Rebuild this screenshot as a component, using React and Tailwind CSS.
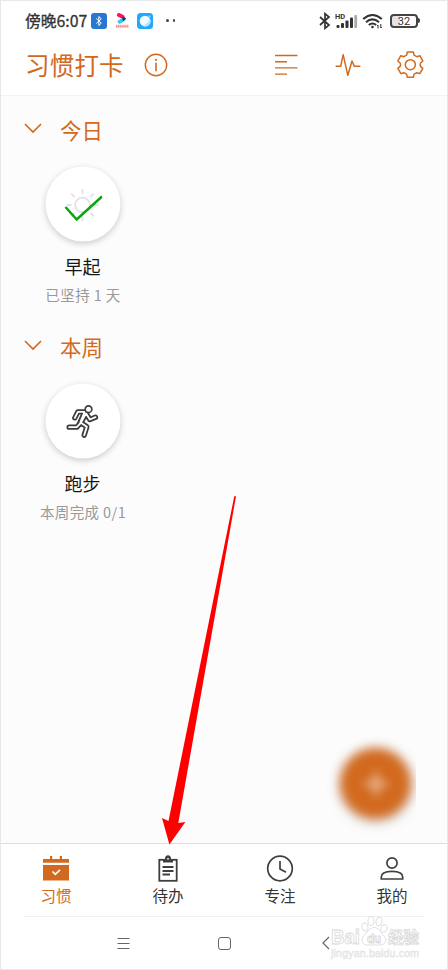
const ORANGE = "#d2691e";

function StatusBar() {
  return (
    <div className="h-[40px] pl-[25px] pr-[28px] pt-[1px] flex items-center justify-between text-[#333]">
      <div className="flex items-center">
        <span className="w-[63px] text-[15.8px] leading-5 font-normal [-webkit-text-stroke:0.3px_#333] whitespace-nowrap">傍晚6:07</span>
        {/* bluetooth */}
        <svg className="ml-[3px]" width="16" height="16" viewBox="0 0 16 16">
          <rect width="16" height="16" rx="3" fill="#2878cf" />
          <path d="M5.3 5.5 10.3 10.2 7.8 12.5V3.5l2.5 2.3-5 4.7" fill="none" stroke="#fff" strokeWidth="1" />
        </svg>
        {/* video app */}
        <svg className="ml-[7px]" width="16" height="16" viewBox="0 0 16 16">
          <path d="M5 2 8.500 3.800" stroke="#f5146c" strokeWidth="4" strokeLinecap="round" />
          <path d="M5.500 8.800 10 6.200" stroke="#33c9ef" strokeWidth="3.800" strokeLinecap="round" />
          <path d="M9 4 11.500 5.600 9 7.600Z" fill="#26305b" stroke="#26305b" strokeLinejoin="round" />
          <path d="M2 13.200h13" stroke="#f58a8e" strokeWidth="3" strokeDasharray="1.3 .8" />
          <path d="M3 13.500h11" stroke="#f8a0a0" strokeWidth="1" />
        </svg>
        <svg className="ml-[7px]" width="16" height="16" viewBox="0 0 16 16">
          <rect width="16" height="16" rx="3.5" fill="#20a9fa" />
          <circle cx="8" cy="8" r="5.3" fill="#f2fbff" />
          <path d="M12.8 5.5A5.3 5.3 0 0 1 5.5 12.8Q11 11 12.8 5.5Z" fill="#b9e5ff" />
          <circle cx="12.5" cy="3.6" r="1" fill="#9ee0ff" />
        </svg>
        <span className="ml-[13px] size-[2.5px] rounded-full bg-[#444]" />
        <span className="ml-[4px] size-[2.5px] rounded-full bg-[#444]" />
      </div>
      <div className="flex items-center">
        <svg width="12" height="18" viewBox="0 0 12 18" fill="none" stroke="#333" strokeWidth="1.7">
          <path d="M1 5 10 13 6 16.3V1.7L10 5 1 13" />
        </svg>
        <svg className="ml-[4px]" width="24" height="18" viewBox="0 0 24 18">
          <text x="0" y="6.500" fontSize="7.500" fontWeight="700" fontFamily="Roboto" fill="#333">HD</text>
          <g fill="#333">
            <rect x="1.500" y="13" width="3" height="3" rx="1" />
            <rect x="6" y="11" width="3" height="5" rx="1" />
            <rect x="10.500" y="8.500" width="3" height="7.500" rx="1" />
            <rect x="15" y="5.500" width="3" height="10.500" rx="1" />
            <rect x="19.300" y="3" width="2.800" height="13" rx="1" fill="#aaa" />
          </g>
        </svg>
        <svg className="ml-[3px]" width="22" height="18" viewBox="0 0 22 18" fill="none" stroke="#333" strokeWidth="2.1">
          <path d="M1.2 7Q10.5-1 19.8 7" />
          <path d="M4 10.2Q10.5 4.7 17 10.2" />
          <path d="M6.8 13Q10.5 10 14.2 13" />
          <circle cx="10.5" cy="15" r="1.3" fill="#333" stroke="none" />
          <path d="M16 16.5V13l-1 1M18.8 12v4l1-1" strokeWidth="1" />
        </svg>
        <div className="ml-[6px] w-[28px] h-[14px] rounded-[4px] border-2 border-[#444] bg-[linear-gradient(90deg,#e4e4e4_32%,#fff_32%)] flex items-center justify-center pt-[1px] text-[11px] leading-none font-[Roboto]">32</div>
        <span className="w-[2px] h-[5px] rounded-r bg-[#444]" />
      </div>
    </div>
  );
}

function Header() {
  return (
    <div className="bg-white h-[96px] border-b border-[#f3f3f3]">
      <StatusBar />
      <div className="h-[50px] pl-[25px] pr-[24px] flex items-center text-[#d2691e]">
        <h1 className="text-[24.5px] leading-[50px] tracking-[0.2px]">习惯打卡</h1>
        <svg className="ml-[20px]" width="24" height="24" viewBox="0 0 24 24" fill="none" stroke={ORANGE} strokeWidth="1.4">
          <circle cx="12" cy="12" r="10.7" />
          <path d="M12 9.7v8.5" strokeWidth="1.6" />
          <circle cx="12" cy="6.8" r="1.1" fill={ORANGE} stroke="none" />
        </svg>
        <div className="ml-auto flex items-center">
          <svg width="24" height="24" viewBox="0 0 24 24" stroke={ORANGE} strokeWidth="1.4">
            <path d="M1 2.5h22.5M1 8.7h12M1 14.9h22.5M1 21.1h12" />
          </svg>
          <svg className="ml-[37px]" width="26" height="26" viewBox="335 155 78 78" fill="none" stroke={ORANGE} strokeWidth="4.5" strokeLinejoin="round">
            <path d="M337 198H352L359.500 163 373.500 225 386 182 393 198H411" />
          </svg>
          <svg className="ml-[35px]" width="28" height="28" viewBox="-43 -41 84 84" fill="none" stroke={ORANGE} strokeWidth="4.500" strokeLinejoin="round">
            <path d="M-9-38H9L11-29Q15-26 19.600-24L28.400-26.800 37.400-11.200 30.600-5Q28 0 30.600 5L37.400 11.200 28.400 26.800 19.600 24Q15 26 11 29L9 38H-9L-11 29Q-15 26-19.600 24L-28.400 26.800-37.400 11.200-30.600 5Q-28 0-30.600-5L-37.400-11.200-28.400-26.800-19.600-24Q-15-26-11-29Z" />
            <circle r="15" />
          </svg>
        </div>
      </div>
    </div>
  );
}

function SunIcon() {
  return (
    <svg width="40" height="34" viewBox="63 187 40 34" fill="none">
      <g stroke="#e2e2e2" strokeWidth="1.8">
        <circle cx="83" cy="204.500" r="7.300" />
        <path d="M83 188.500v5M83 215.500v5M67 204.500h5M94 204.500h5M71.700 193.200l3.400 3.400M94.300 193.200l-3.400 3.400M71.700 215.800l3.400-3.400M94.300 215.800l-3.400-3.400" />
      </g>
      <path d="M66 206.500 77.200 219 102.500 196" stroke="#08a80c" strokeWidth="2.5" />
    </svg>
  );
}

// limbs are stroked twice, the thin white pass hollows them out
const RUNNER = "M226 293 235 275 254 275M259 281 244 308 262 320 254 345M243 309 232 321H209M260 280 271 298 288 291";

function RunIcon() {
  return (
    <svg width="34" height="36" viewBox="198 250 102 108" fill="none" strokeLinecap="round" strokeLinejoin="round">
      <path d={RUNNER} stroke="#3c3c3c" strokeWidth="16" />
      <path d="M254 277 240 308" stroke="#3c3c3c" strokeWidth="14" />
      <path d={RUNNER} stroke="#fff" strokeWidth="5.500" />
      <path d="M255 277 243 306" stroke="#fff" strokeWidth="6" />
      <circle cx="267" cy="267" r="10" fill="#fff" stroke="#3c3c3c" strokeWidth="5" />
    </svg>
  );
}

function Section({ title, name, note, icon }) {
  return (
    <section className="h-[217px]">
      <div className="h-[34px] pl-[24px] flex items-center">
        <svg className="-mt-1" width="18" height="11" viewBox="0 0 18 11" fill="none" stroke={ORANGE} strokeWidth="1.6">
          <path d="M1 1 9 9 17 1" />
        </svg>
        <h2 className="-mt-[1px] ml-[18px] text-[21.5px] leading-[34px] text-[#d2691e]">{title}</h2>
      </div>
      <div className="ml-[28px] mt-[20px] w-[110px] flex flex-col items-center">
        <div className="size-[75px] -translate-x-[0.5px] -translate-y-[0.5px] rounded-full bg-white shadow-[0_2px_6px_rgba(0,0,0,0.2)] flex items-center justify-center">
          {icon}
        </div>
        <div className="-ml-px mt-[12px] text-[18px] leading-6 text-[#171717]">{name}</div>
        <div className="mt-[7px] text-[14.5px] leading-5 text-[#999] tracking-[0.4px] whitespace-nowrap">{note}</div>
      </div>
    </section>
  );
}

function CalendarIcon() {
  return (
    <svg width="28" height="28" viewBox="0 0 28 28">
      <path d="M1 4H8V1H10.200V4H17.800V1H20V4H27V7.800H1ZM1 10H27V25.500H1Z" fill={ORANGE} />
      <path d="M10.500 16.500 13.300 19.300 18 14.800" fill="none" stroke="#fff" strokeWidth="1.7" />
    </svg>
  );
}

function ClipboardIcon() {
  return (
    <svg width="28" height="28" viewBox="0 0 28 28" fill="none" stroke="#3f3f3f" strokeWidth="1.8">
      <rect x="5.300" y="4.800" width="17.400" height="21" />
      <path d="M9 7.500V4H11Q11 .3 14 .3T17 4H19V7.500Z" fill="#3f3f3f" stroke="none" />
      <circle cx="14" cy="3.800" r="0.900" fill="#fff" stroke="none" />
      <path d="M8.500 12h11M8.500 16h11M8.500 19.500h7.500" />
    </svg>
  );
}

function ClockIcon() {
  return (
    <svg width="28" height="28" viewBox="0 0 28 28" fill="none" stroke="#3f3f3f" strokeWidth="1.700">
      <circle cx="14" cy="13.500" r="12.300" />
      <path d="M14 6V14L20 17.300" />
    </svg>
  );
}

function UserIcon() {
  return (
    <svg width="28" height="28" viewBox="0 0 28 28" fill="none" stroke="#3f3f3f" strokeWidth="1.700">
      <circle cx="14" cy="8" r="5.100" />
      <path d="M3.300 24V22C3.300 18 8 16.300 14 16.300S24.700 18 24.700 22V24Z" />
    </svg>
  );
}

const tabs = [
  { label: "习惯", icon: <CalendarIcon />, active: true },
  { label: "待办", icon: <ClipboardIcon /> },
  { label: "专注", icon: <ClockIcon /> },
  { label: "我的", icon: <UserIcon /> },
];

function Watermark() {
  return (
    <svg className="absolute right-[27px] top-[-2px]" width="96" height="46" viewBox="325 915 96 46" stroke="#d8d8d8" strokeWidth="0.8" fill="#fff" fontFamily="'Liberation Sans','Noto Sans CJK SC',sans-serif">
      <text x="331" y="944" fontSize="20" fontWeight="700" textLength="29" lengthAdjust="spacingAndGlyphs">Bai</text>
      <ellipse cx="365" cy="927" rx="3" ry="4.200" transform="rotate(-15 365 927)" />
      <ellipse cx="371" cy="921" rx="3" ry="4.500" />
      <ellipse cx="379" cy="921.500" rx="3" ry="4.500" transform="rotate(12 379 921.5)" />
      <ellipse cx="384" cy="928.500" rx="3" ry="4" transform="rotate(20 384 928.5)" />
      <path d="M374 927.500C369 928 368 932 364 935.500 360.500 939 362 945 367 945H381C387 944 387 938 383 935 379.500 932 379 927.500 374 927.500Z" />
      <text x="367" y="942.500" fontSize="12" fontWeight="700" textLength="14">du</text>
      <text x="388" y="943" fontSize="16" fontWeight="700" textLength="31" lengthAdjust="spacingAndGlyphs">经验</text>
      <text x="331" y="956.500" fontSize="10.500" textLength="88" strokeWidth="0.500" stroke="#e2e2e2" fill="#f3f3f3">jingyan.baidu.com</text>
    </svg>
  );
}

function BottomBar() {
  return (
    <div className="h-[127px] bg-white border-t border-[#dedede]">
      <div className="h-[72px] grid grid-cols-4">
        {tabs.map((tab) => (
          <div key={tab.label} className={tab.active ? "flex flex-col items-center pt-[11px] text-[#d2691e]" : "flex flex-col items-center pt-[11px] text-[#333]"}>
            {tab.icon}
            <span className="mt-[2px] text-[15.5px] leading-5">{tab.label}</span>
          </div>
        ))}
      </div>
      <div className="mx-[24px] border-t border-[#f0f0f0]" />
      <div className="relative h-[52px] pl-[117px] flex items-center text-[#666]">
        <svg width="13" height="13" viewBox="0 0 13 13" stroke="currentColor" strokeWidth="1.100">
          <path d="M.5 1.500h12M.5 6.500h12M.5 11.500h12" />
        </svg>
        <div className="ml-[88px] size-[13px] rounded-[3px] border-[1.2px] border-[#666]" />
        <svg className="ml-[91px]" width="8" height="14" viewBox="0 0 8 14" fill="none" stroke="currentColor" strokeWidth="1.200">
          <path d="M7 1 1 7 7 13" />
        </svg>
        <Watermark />
      </div>
    </div>
  );
}

function AddButton() {
  return (
    <div className="absolute left-[325px] top-[732px] w-[91px] h-[110px] overflow-hidden">
      <div className="absolute left-[17px] top-[21px] size-[68px] rounded-full bg-[#999] opacity-40 blur-[8px]" />
      <div className="absolute left-[15px] top-[16px] size-[71px] rounded-full bg-[#d2691e] blur-[5.5px]" />
      <svg className="absolute left-[31px] top-[32px] blur-[5px] opacity-70" width="40" height="40" viewBox="0 0 40 40" stroke="#fff" strokeWidth="3.500">
        <path d="M20 8v24M8 20h24" />
      </svg>
    </div>
  );
}

export default function App() {
  return (
    <div className="relative w-[448px] h-[970px] overflow-hidden bg-[#fcfcfc] flex flex-col font-['Noto_Sans_CJK_SC',sans-serif]">
      <Header />
      <main className="flex-1 min-h-0 pt-[17px]">
        <Section title="今日" name="早起" note="已坚持 1 天" icon={<SunIcon />} />
        <Section title="本周" name="跑步" note="本周完成 0/1" icon={<RunIcon />} />
      </main>
      <BottomBar />
      <AddButton />
      {/* pointer to the todo tab */}
      <svg className="absolute left-[160px] top-[494px]" width="80" height="352" viewBox="160 494 80 352">
        <path d="M234.300 496.200 236 496.200 178.300 823 185.400 822 169.400 844.500 162 818 168.500 821Z" fill="#f00" />
      </svg>
      <div className="absolute inset-0 border border-[#e8e8e8] pointer-events-none" />
    </div>
  );
}
